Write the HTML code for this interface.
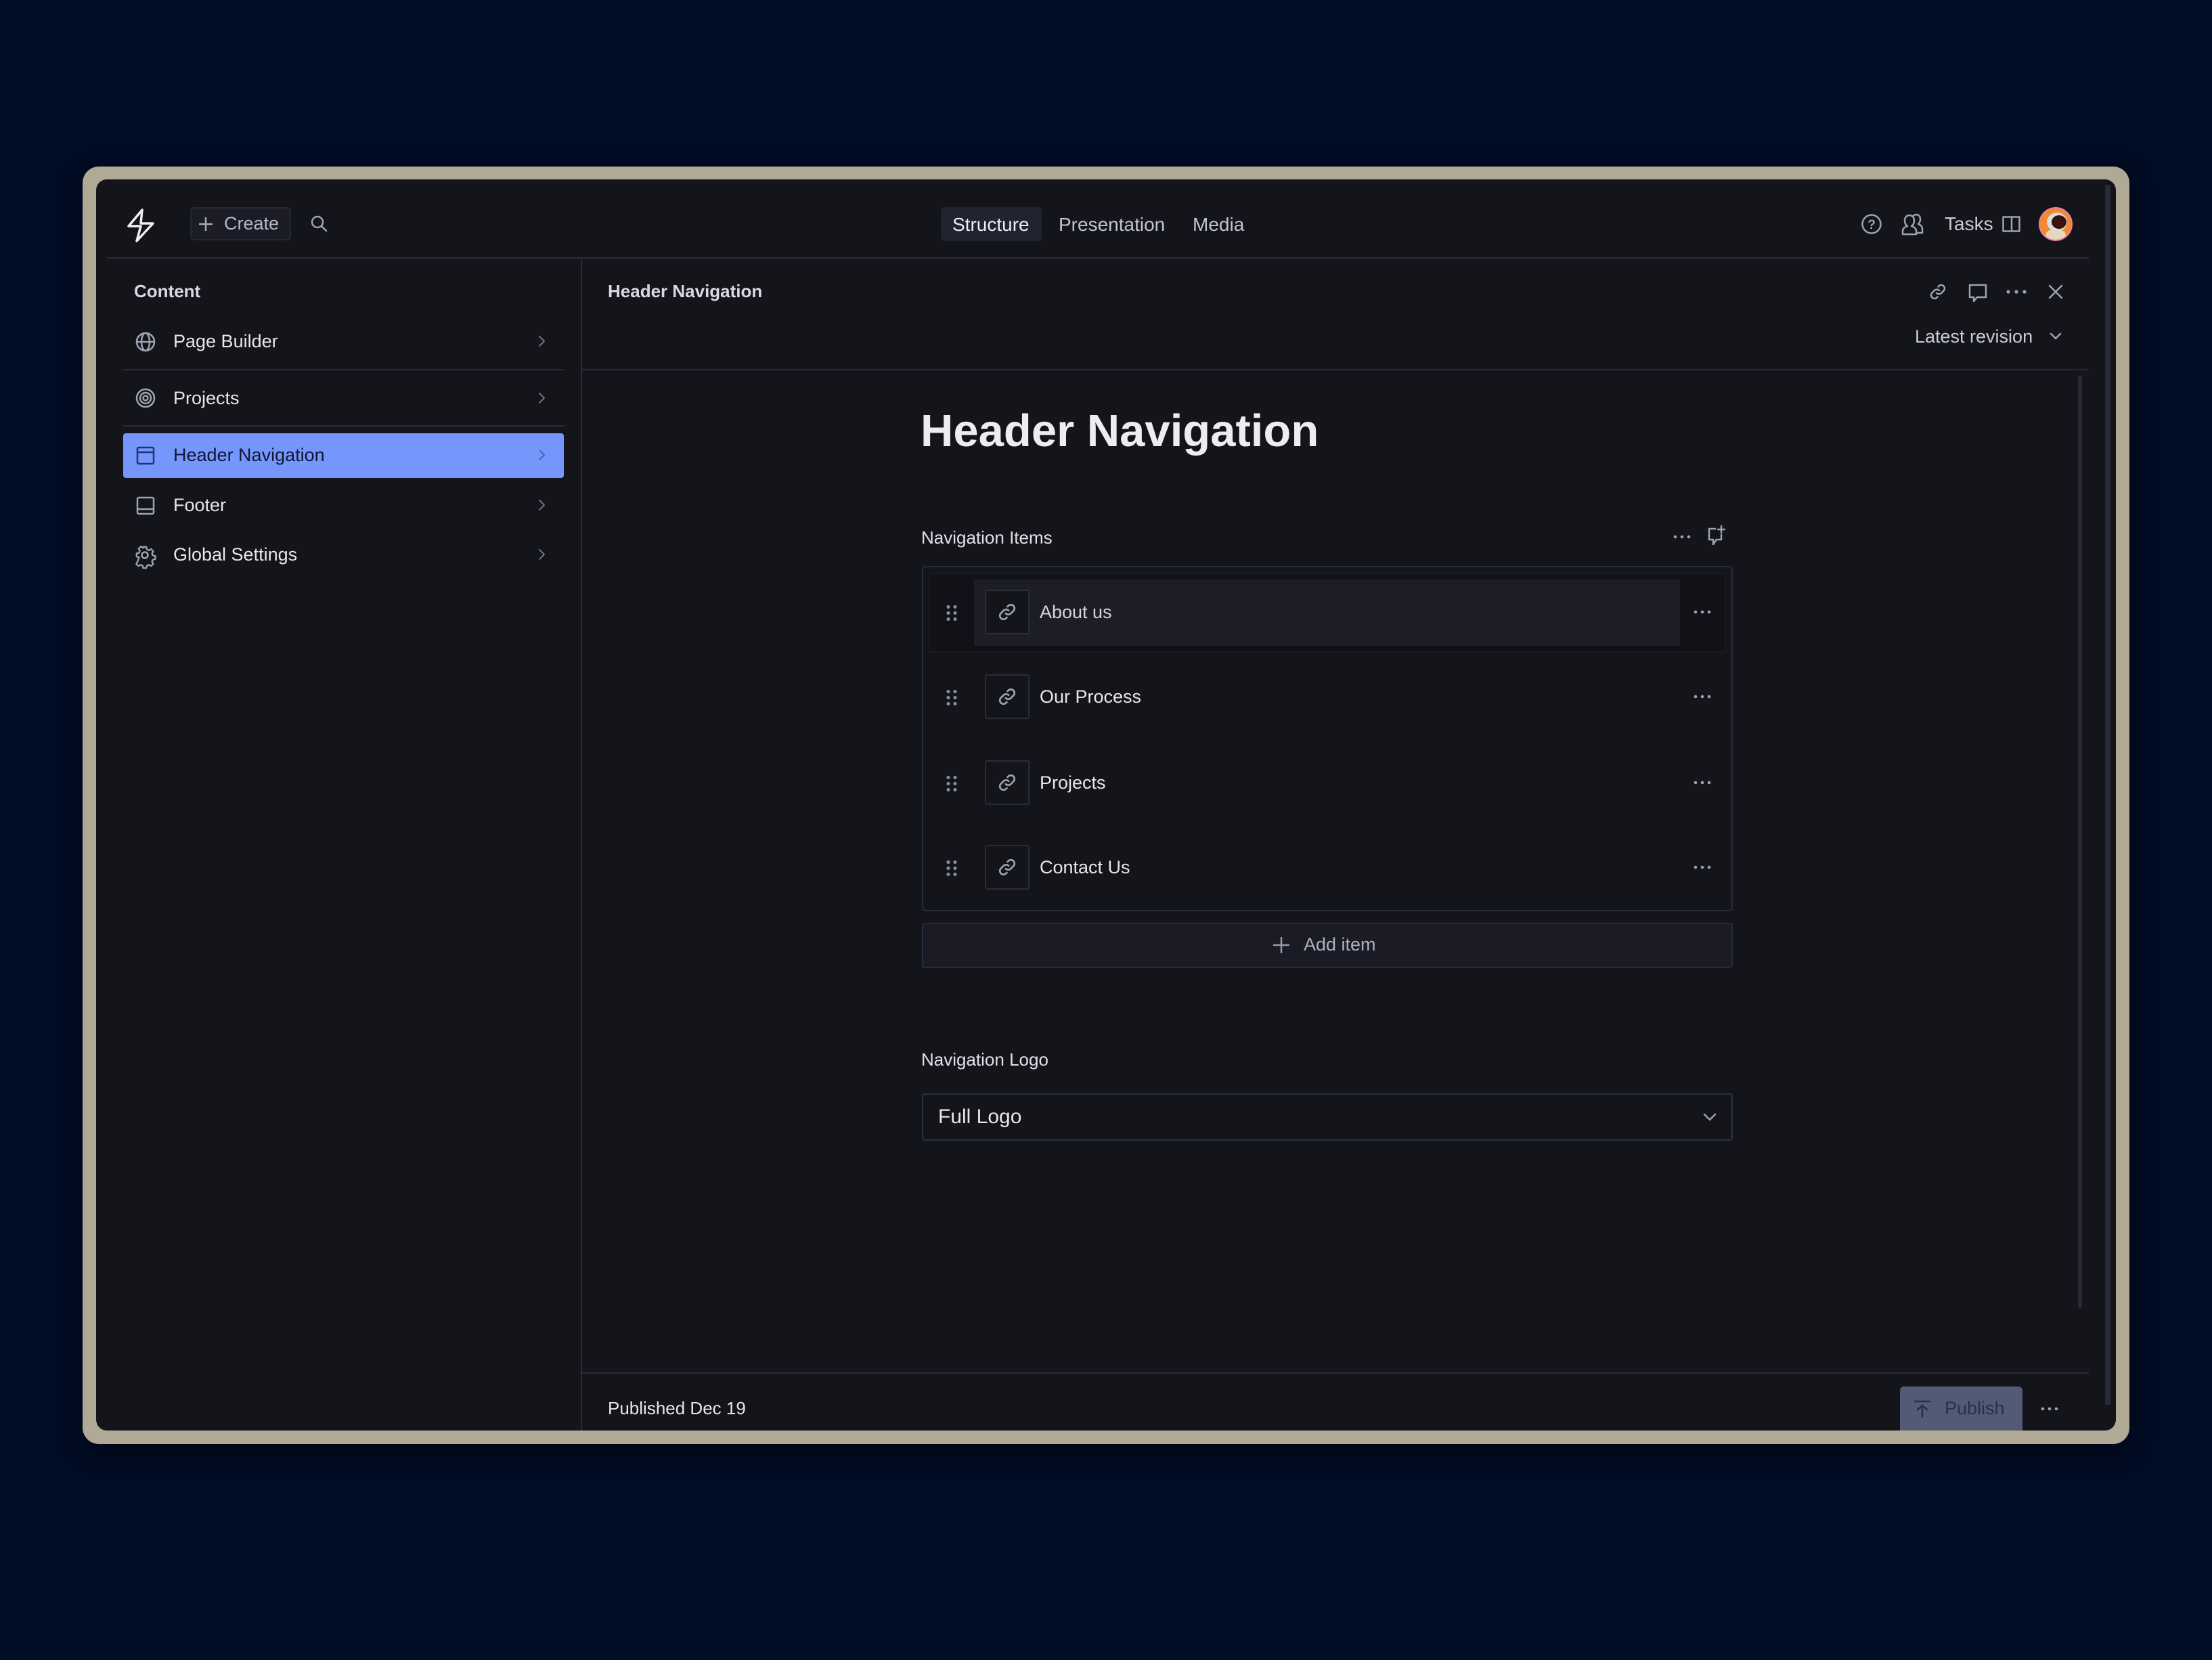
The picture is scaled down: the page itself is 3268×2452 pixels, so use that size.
<!DOCTYPE html>
<html><head><meta charset="utf-8">
<style>
*{margin:0;padding:0;box-sizing:border-box}
body{width:3268px;height:2452px;background:#010c25;font-family:"Liberation Sans",sans-serif;position:relative;overflow:hidden;color:#e4e4ea}
.a{position:absolute}
.frame{left:122px;top:246px;width:3024px;height:1887px;background:#b0a996;border-radius:24px;box-shadow:0 10px 40px rgba(0,0,0,.5)}
.inner{left:142px;top:265px;width:2984px;height:1848px;background:#14151b;border-radius:16px;overflow:hidden}
.t{position:absolute;white-space:nowrap;line-height:1}
.hl{position:absolute;height:2px;background:#2a2a3d}
.vl{position:absolute;width:2px;background:#2a2a3d}
svg{position:absolute;overflow:visible}
.ic{fill:none;stroke:#a0a1b2;stroke-width:2.5;stroke-linecap:round;stroke-linejoin:round}
.ch{fill:none;stroke:#7d7e90;stroke-width:1.8;stroke-linecap:round;stroke-linejoin:round}
</style></head><body>
<div class="a frame"></div>
<div class="a inner"></div>
<div class="a" style="left:3110px;top:273px;width:8px;height:1802px;background:#2a2a3e"></div>

<svg style="left:186px;top:308px" width="44" height="50" viewBox="0 0 44 50"><path d="M24 2 L4 26 L22 26 L16 48 L40 22 L22 22 Z" fill="none" stroke="#f0f0f4" stroke-width="3.5" stroke-linejoin="round"/></svg>
<div class="a" style="left:281px;top:306px;width:149px;height:49px;background:#1b1c26;border:2px solid #262736;border-radius:6px"></div>
<svg style="left:292px;top:319px" width="24" height="24"><path d="M12 2V22M2 12H22" stroke="#a8a9b8" stroke-width="2.5"/></svg>
<div class="t" style="left:331px;top:317px;font-size:27px;color:#b6b7c6">Create</div>
<svg style="left:458px;top:317px" width="26" height="26"><circle cx="11" cy="11" r="8" class="ic"/><path d="M17 17L24 24" class="ic"/></svg>

<div class="a" style="left:1390px;top:306px;width:149px;height:50px;background:#212330;border-radius:6px"></div>
<div class="t" style="left:1407px;top:318px;font-size:28px;color:#eeeef2">Structure</div>
<div class="t" style="left:1564px;top:318px;font-size:28px;color:#c2c3d0">Presentation</div>
<div class="t" style="left:1762px;top:318px;font-size:28px;color:#c2c3d0">Media</div>

<svg style="left:2750px;top:316px" width="30" height="30"><circle cx="15" cy="15" r="13.5" class="ic"/><text x="15" y="22" font-size="19" font-family="Liberation Sans" font-weight="bold" fill="#a0a1b2" text-anchor="middle">?</text></svg>
<svg style="left:2808px;top:314px" width="34" height="34" viewBox="0 0 34 34"><path class="ic" d="M3 32V27C3 23 7 21 10 20C7 18 6 15 6 12C6 7 9 4 13 4C17 4 20 7 20 12C20 15 19 18 16 20C19 21 23 23 23 27V32Z M18 6C19 4 21 3 23 3C27 3 29 6 29 10C29 13 28 15 26 17C29 18 32 20 32 24V30H23"/></svg>
<div class="t" style="left:2873px;top:317px;font-size:28px;color:#c9cad6">Tasks</div>
<svg style="left:2958px;top:319px" width="27" height="24"><rect x="1.5" y="1.5" width="24" height="21" class="ic"/><path d="M14 2V22" class="ic"/></svg>
<div class="a" style="left:3012px;top:306px;width:50px;height:50px;border-radius:50%;background:#f08a2c;border:2px solid #f27aa8;overflow:hidden">
<div class="a" style="left:10px;top:6px;width:30px;height:28px;border-radius:50%;background:#d8dde0"></div>
<div class="a" style="left:17px;top:10px;width:22px;height:20px;border-radius:50%;background:#3a1010"></div>
<div class="a" style="left:8px;top:32px;width:30px;height:18px;background:#e6d8c0;border-radius:8px"></div>
</div>

<div class="hl" style="left:158px;top:380px;width:2928px"></div>
<div class="vl" style="left:858px;top:381px;height:1732px"></div>

<div class="t" style="left:198px;top:417px;font-size:26px;font-weight:bold;color:#d8d9e2">Content</div>
<svg style="left:200px;top:490px" width="30" height="30"><circle cx="15" cy="15" r="13" class="ic"/><ellipse cx="15" cy="15" rx="6" ry="13" class="ic"/><path d="M2 15H28" class="ic"/></svg>
<div class="t" style="left:256px;top:491px;font-size:27px;color:#e6e6ec">Page Builder</div>
<svg style="left:795px;top:495px" width="10" height="18"><path d="M2 2L9 9L2 16" class="ch"/></svg>
<div class="hl" style="left:182px;top:545px;width:651px"></div>
<svg style="left:200px;top:573px" width="30" height="30"><circle cx="15" cy="15" r="13" class="ic"/><circle cx="15" cy="15" r="8" class="ic"/><circle cx="15" cy="15" r="3.5" class="ic"/></svg>
<div class="t" style="left:256px;top:575px;font-size:27px;color:#e6e6ec">Projects</div>
<svg style="left:795px;top:579px" width="10" height="18"><path d="M2 2L9 9L2 16" class="ch"/></svg>
<div class="hl" style="left:182px;top:628px;width:651px"></div>
<div class="a" style="left:182px;top:640px;width:651px;height:66px;background:#7596fd;border-radius:4px"></div>
<svg style="left:201px;top:659px" width="28" height="28"><rect x="2" y="2" width="24" height="24" rx="2" fill="none" stroke="#243372" stroke-width="2.5"/><path d="M2 9H26" stroke="#243372" stroke-width="2.5"/></svg>
<div class="t" style="left:256px;top:659px;font-size:27px;color:#0f1734">Header Navigation</div>
<svg style="left:795px;top:663px" width="10" height="18"><path d="M2 2L9 9L2 16" fill="none" stroke="#4a5ca8" stroke-width="1.8"/></svg>
<svg style="left:201px;top:733px" width="28" height="28"><rect x="2" y="2" width="24" height="24" rx="2" class="ic"/><path d="M2 19H26" class="ic"/></svg>
<div class="t" style="left:256px;top:733px;font-size:27px;color:#e6e6ec">Footer</div>
<svg style="left:795px;top:737px" width="10" height="18"><path d="M2 2L9 9L2 16" class="ch"/></svg>
<svg style="left:199px;top:805px" width="30" height="30" viewBox="0 0 30 30"><path class="ic" d="M12.5 2h5l1 4 3 1.5 3.5-2 3.5 3.5-2 3.5 1.2 3 4 1v5l-4 1-1.2 3 2 3.5-3.5 3.5-3.5-2-3 1.2-1 4h-5l-1-4-3-1.2-3.5 2-3.5-3.5 2-3.5L6 18.5 2 17.5v-5l4-1L7.2 8.5l-2-3.5L8.7 1.5l3.5 2 3-1.5z" transform="scale(0.93) translate(1 1)"/><circle cx="15" cy="15" r="4.5" class="ic"/></svg>
<div class="t" style="left:256px;top:806px;font-size:27px;color:#e6e6ec">Global Settings</div>
<svg style="left:795px;top:810px" width="10" height="18"><path d="M2 2L9 9L2 16" class="ch"/></svg>

<div class="t" style="left:898px;top:417px;font-size:26px;font-weight:bold;color:#d8d9e2">Header Navigation</div>
<svg style="left:2850px;top:418px" width="26" height="26" viewBox="0 0 26 26"><path class="ic" d="M11 15a5 5 0 0 0 7 0l4-4a5 5 0 0 0-7-7l-1.5 1.5M15 11a5 5 0 0 0-7 0l-4 4a5 5 0 0 0 7 7l1.5-1.5"/></svg>
<svg style="left:2908px;top:419px" width="28" height="28"><path class="ic" d="M2 2H26V20H13L8 26V20H2Z"/></svg>
<svg style="left:2964px;top:428px" width="30" height="6"><circle cx="3" cy="3" r="2.6" fill="#a0a1b2"/><circle cx="15" cy="3" r="2.6" fill="#a0a1b2"/><circle cx="27" cy="3" r="2.6" fill="#a0a1b2"/></svg>
<svg style="left:3026px;top:420px" width="22" height="22"><path d="M2 2L20 20M20 2L2 20" class="ic"/></svg>
<div class="t" style="left:2829px;top:484px;font-size:27px;color:#c9cad6">Latest revision</div>
<svg style="left:3028px;top:491px" width="18" height="12"><path d="M2 2L9 9L16 2" class="ic" stroke-width="2"/></svg>
<div class="hl" style="left:859px;top:545px;width:2227px"></div>
<div class="a" style="left:3070px;top:554px;width:6px;height:1378px;background:#2a2a3a;border-radius:3px"></div>

<div class="t" style="left:1360px;top:603px;font-size:67px;font-weight:bold;color:#ececf2">Header Navigation</div>
<div class="t" style="left:1361px;top:781px;font-size:26px;color:#e0e0e8">Navigation Items</div>
<svg style="left:2472px;top:790px" width="26" height="6"><circle cx="3" cy="3" r="2.3" fill="#a0a1b2"/><circle cx="13" cy="3" r="2.3" fill="#a0a1b2"/><circle cx="23" cy="3" r="2.3" fill="#a0a1b2"/></svg>
<svg style="left:2522px;top:776px" width="30" height="30"><path class="ic" d="M12 5H3V21H9V28L14 21H21V14M21 1V11M16 6H26"/></svg>

<div class="a" style="left:1362px;top:836px;width:1198px;height:510px;border:2px solid #2a2a3d;border-radius:6px"></div>
<div class="a" style="left:1372px;top:847px;width:1178px;height:116px;background:#111217;border:1px solid #1e1f29"></div>
<div class="a" style="left:1439px;top:856px;width:1043px;height:98px;background:#1c1d27"></div>

<div class="a" style="left:1396px;top:892px;width:20px;height:26px;background:radial-gradient(circle,#8a8b9c 2.3px,transparent 2.8px) 0 0/10px 9px"></div>
<div class="a" style="left:1455px;top:871px;width:66px;height:66px;border:2px solid #2a2b38;border-radius:3px;background:#14151b"></div>
<svg style="left:1474px;top:890px" width="28" height="28" viewBox="0 0 26 26"><path class="ic" d="M11 15a5 5 0 0 0 7 0l4-4a5 5 0 0 0-7-7l-1.5 1.5M15 11a5 5 0 0 0-7 0l-4 4a5 5 0 0 0 7 7l1.5-1.5"/></svg>
<div class="t" style="left:1536px;top:891px;font-size:27px;color:#d4d5de">About us</div>
<svg style="left:2502px;top:901px" width="26" height="6"><circle cx="3" cy="3" r="2.3" fill="#a0a1b2"/><circle cx="13" cy="3" r="2.3" fill="#a0a1b2"/><circle cx="23" cy="3" r="2.3" fill="#a0a1b2"/></svg>

<div class="a" style="left:1396px;top:1017px;width:20px;height:26px;background:radial-gradient(circle,#8a8b9c 2.3px,transparent 2.8px) 0 0/10px 9px"></div>
<div class="a" style="left:1455px;top:996px;width:66px;height:66px;border:2px solid #2a2b38;border-radius:3px"></div>
<svg style="left:1474px;top:1015px" width="28" height="28" viewBox="0 0 26 26"><path class="ic" d="M11 15a5 5 0 0 0 7 0l4-4a5 5 0 0 0-7-7l-1.5 1.5M15 11a5 5 0 0 0-7 0l-4 4a5 5 0 0 0 7 7l1.5-1.5"/></svg>
<div class="t" style="left:1536px;top:1016px;font-size:27px;color:#e6e6ec">Our Process</div>
<svg style="left:2502px;top:1026px" width="26" height="6"><circle cx="3" cy="3" r="2.3" fill="#a0a1b2"/><circle cx="13" cy="3" r="2.3" fill="#a0a1b2"/><circle cx="23" cy="3" r="2.3" fill="#a0a1b2"/></svg>

<div class="a" style="left:1396px;top:1144px;width:20px;height:26px;background:radial-gradient(circle,#8a8b9c 2.3px,transparent 2.8px) 0 0/10px 9px"></div>
<div class="a" style="left:1455px;top:1123px;width:66px;height:66px;border:2px solid #2a2b38;border-radius:3px"></div>
<svg style="left:1474px;top:1142px" width="28" height="28" viewBox="0 0 26 26"><path class="ic" d="M11 15a5 5 0 0 0 7 0l4-4a5 5 0 0 0-7-7l-1.5 1.5M15 11a5 5 0 0 0-7 0l-4 4a5 5 0 0 0 7 7l1.5-1.5"/></svg>
<div class="t" style="left:1536px;top:1143px;font-size:27px;color:#e6e6ec">Projects</div>
<svg style="left:2502px;top:1153px" width="26" height="6"><circle cx="3" cy="3" r="2.3" fill="#a0a1b2"/><circle cx="13" cy="3" r="2.3" fill="#a0a1b2"/><circle cx="23" cy="3" r="2.3" fill="#a0a1b2"/></svg>

<div class="a" style="left:1396px;top:1269px;width:20px;height:26px;background:radial-gradient(circle,#8a8b9c 2.3px,transparent 2.8px) 0 0/10px 9px"></div>
<div class="a" style="left:1455px;top:1248px;width:66px;height:66px;border:2px solid #2a2b38;border-radius:3px"></div>
<svg style="left:1474px;top:1267px" width="28" height="28" viewBox="0 0 26 26"><path class="ic" d="M11 15a5 5 0 0 0 7 0l4-4a5 5 0 0 0-7-7l-1.5 1.5M15 11a5 5 0 0 0-7 0l-4 4a5 5 0 0 0 7 7l1.5-1.5"/></svg>
<div class="t" style="left:1536px;top:1268px;font-size:27px;color:#e6e6ec">Contact Us</div>
<svg style="left:2502px;top:1278px" width="26" height="6"><circle cx="3" cy="3" r="2.3" fill="#a0a1b2"/><circle cx="13" cy="3" r="2.3" fill="#a0a1b2"/><circle cx="23" cy="3" r="2.3" fill="#a0a1b2"/></svg>

<div class="a" style="left:1362px;top:1363px;width:1198px;height:67px;background:#1a1b24;border:2px solid #2a2b3a;border-radius:4px"></div>
<svg style="left:1880px;top:1383px" width="26" height="26"><path d="M13 1V25M1 13H25" stroke="#9a9bac" stroke-width="2.5"/></svg>
<div class="t" style="left:1926px;top:1382px;font-size:27px;color:#b0b1c0">Add item</div>

<div class="t" style="left:1361px;top:1552px;font-size:26px;color:#e0e0e8">Navigation Logo</div>
<div class="a" style="left:1362px;top:1615px;width:1198px;height:70px;border:2px solid #2e2f40;border-radius:4px;background:#14151b"></div>
<div class="t" style="left:1386px;top:1635px;font-size:30px;color:#e6e6ec">Full Logo</div>
<svg style="left:2516px;top:1644px" width="20" height="12"><path d="M2 2L10 10L18 2" class="ic" stroke="#c9cad6"/></svg>

<div class="hl" style="left:859px;top:2027px;width:2227px"></div>
<div class="t" style="left:898px;top:2067px;font-size:26px;color:#e6e6ec">Published Dec 19</div>
<div class="a" style="left:2807px;top:2048px;width:181px;height:65px;background:#525a75;border-radius:6px 6px 0 0"></div>
<svg style="left:2826px;top:2068px" width="28" height="28"><path d="M2 2H26M14 26V8M6 15L14 8L22 15" fill="none" stroke="#2a3045" stroke-width="2.5"/></svg>
<div class="t" style="left:2873px;top:2067px;font-size:27px;color:#2a3045">Publish</div>
<svg style="left:3015px;top:2078px" width="26" height="6"><circle cx="3" cy="3" r="2.3" fill="#a0a1b2"/><circle cx="13" cy="3" r="2.3" fill="#a0a1b2"/><circle cx="23" cy="3" r="2.3" fill="#a0a1b2"/></svg>
</body></html>
